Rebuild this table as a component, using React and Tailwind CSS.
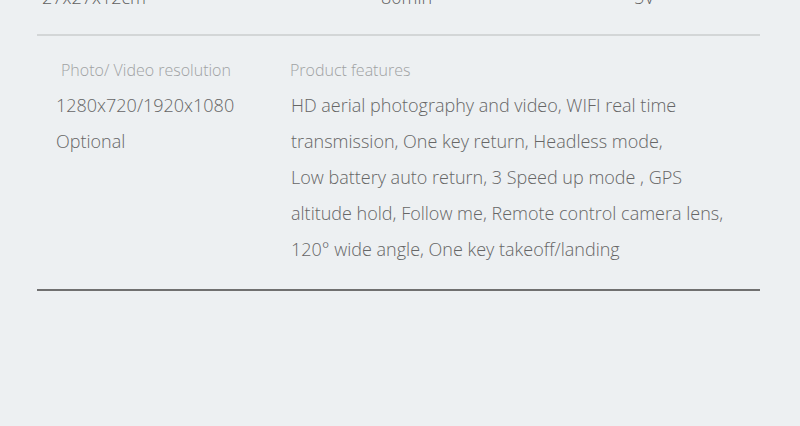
export default function App() {
  return (
    <div
      className="w-[800px] h-[426px] overflow-hidden bg-[#edf0f2]"
      style={{ fontFamily: '"Open Sans", "Noto Sans", sans-serif' }}
    >
      <div className="ml-[37px] w-[723px]">
        <div className="-mt-[21px] flex h-[36px] text-[18px] leading-[36px] text-[#606060] font-light">
          <div className="w-[344px] pl-[5px]">27x27x12cm</div>
          <div className="w-[253px]">80min</div>
          <div>5V</div>
        </div>
        <div className="mt-[19px] h-[2px] bg-[#d3d6d7]" />
        <div className="flex pt-[22px] h-[253px]">
          <div className="w-[253px] pl-[19px]">
            <div className="pl-[5px] text-[16px] leading-[24px] text-[#a0a2a3] font-light">
              Photo/ Video resolution
            </div>
            <div className="mt-[5px] text-[18px] leading-[36px] text-[#666] font-light">
              1280x720/1920x1080
              <br />
              Optional
            </div>
          </div>
          <div className="flex-1">
            <div className="text-[16px] leading-[24px] text-[#a0a2a3] font-light">
              Product features
            </div>
            <div className="mt-[5px] pl-[1px] text-[18px] leading-[36px] text-[#666] font-light">
              HD aerial photography and video, WIFI real time
              <br />
              transmission, One key return, Headless mode,
              <br />
              Low battery auto return, 3 Speed up mode , GPS
              <br />
              altitude hold, Follow me, Remote control camera lens,
              <br />
              120° wide angle, One key takeoff/landing
            </div>
          </div>
        </div>
        <div className="h-[2px] bg-[#707070]" />
      </div>
    </div>
  );
}
